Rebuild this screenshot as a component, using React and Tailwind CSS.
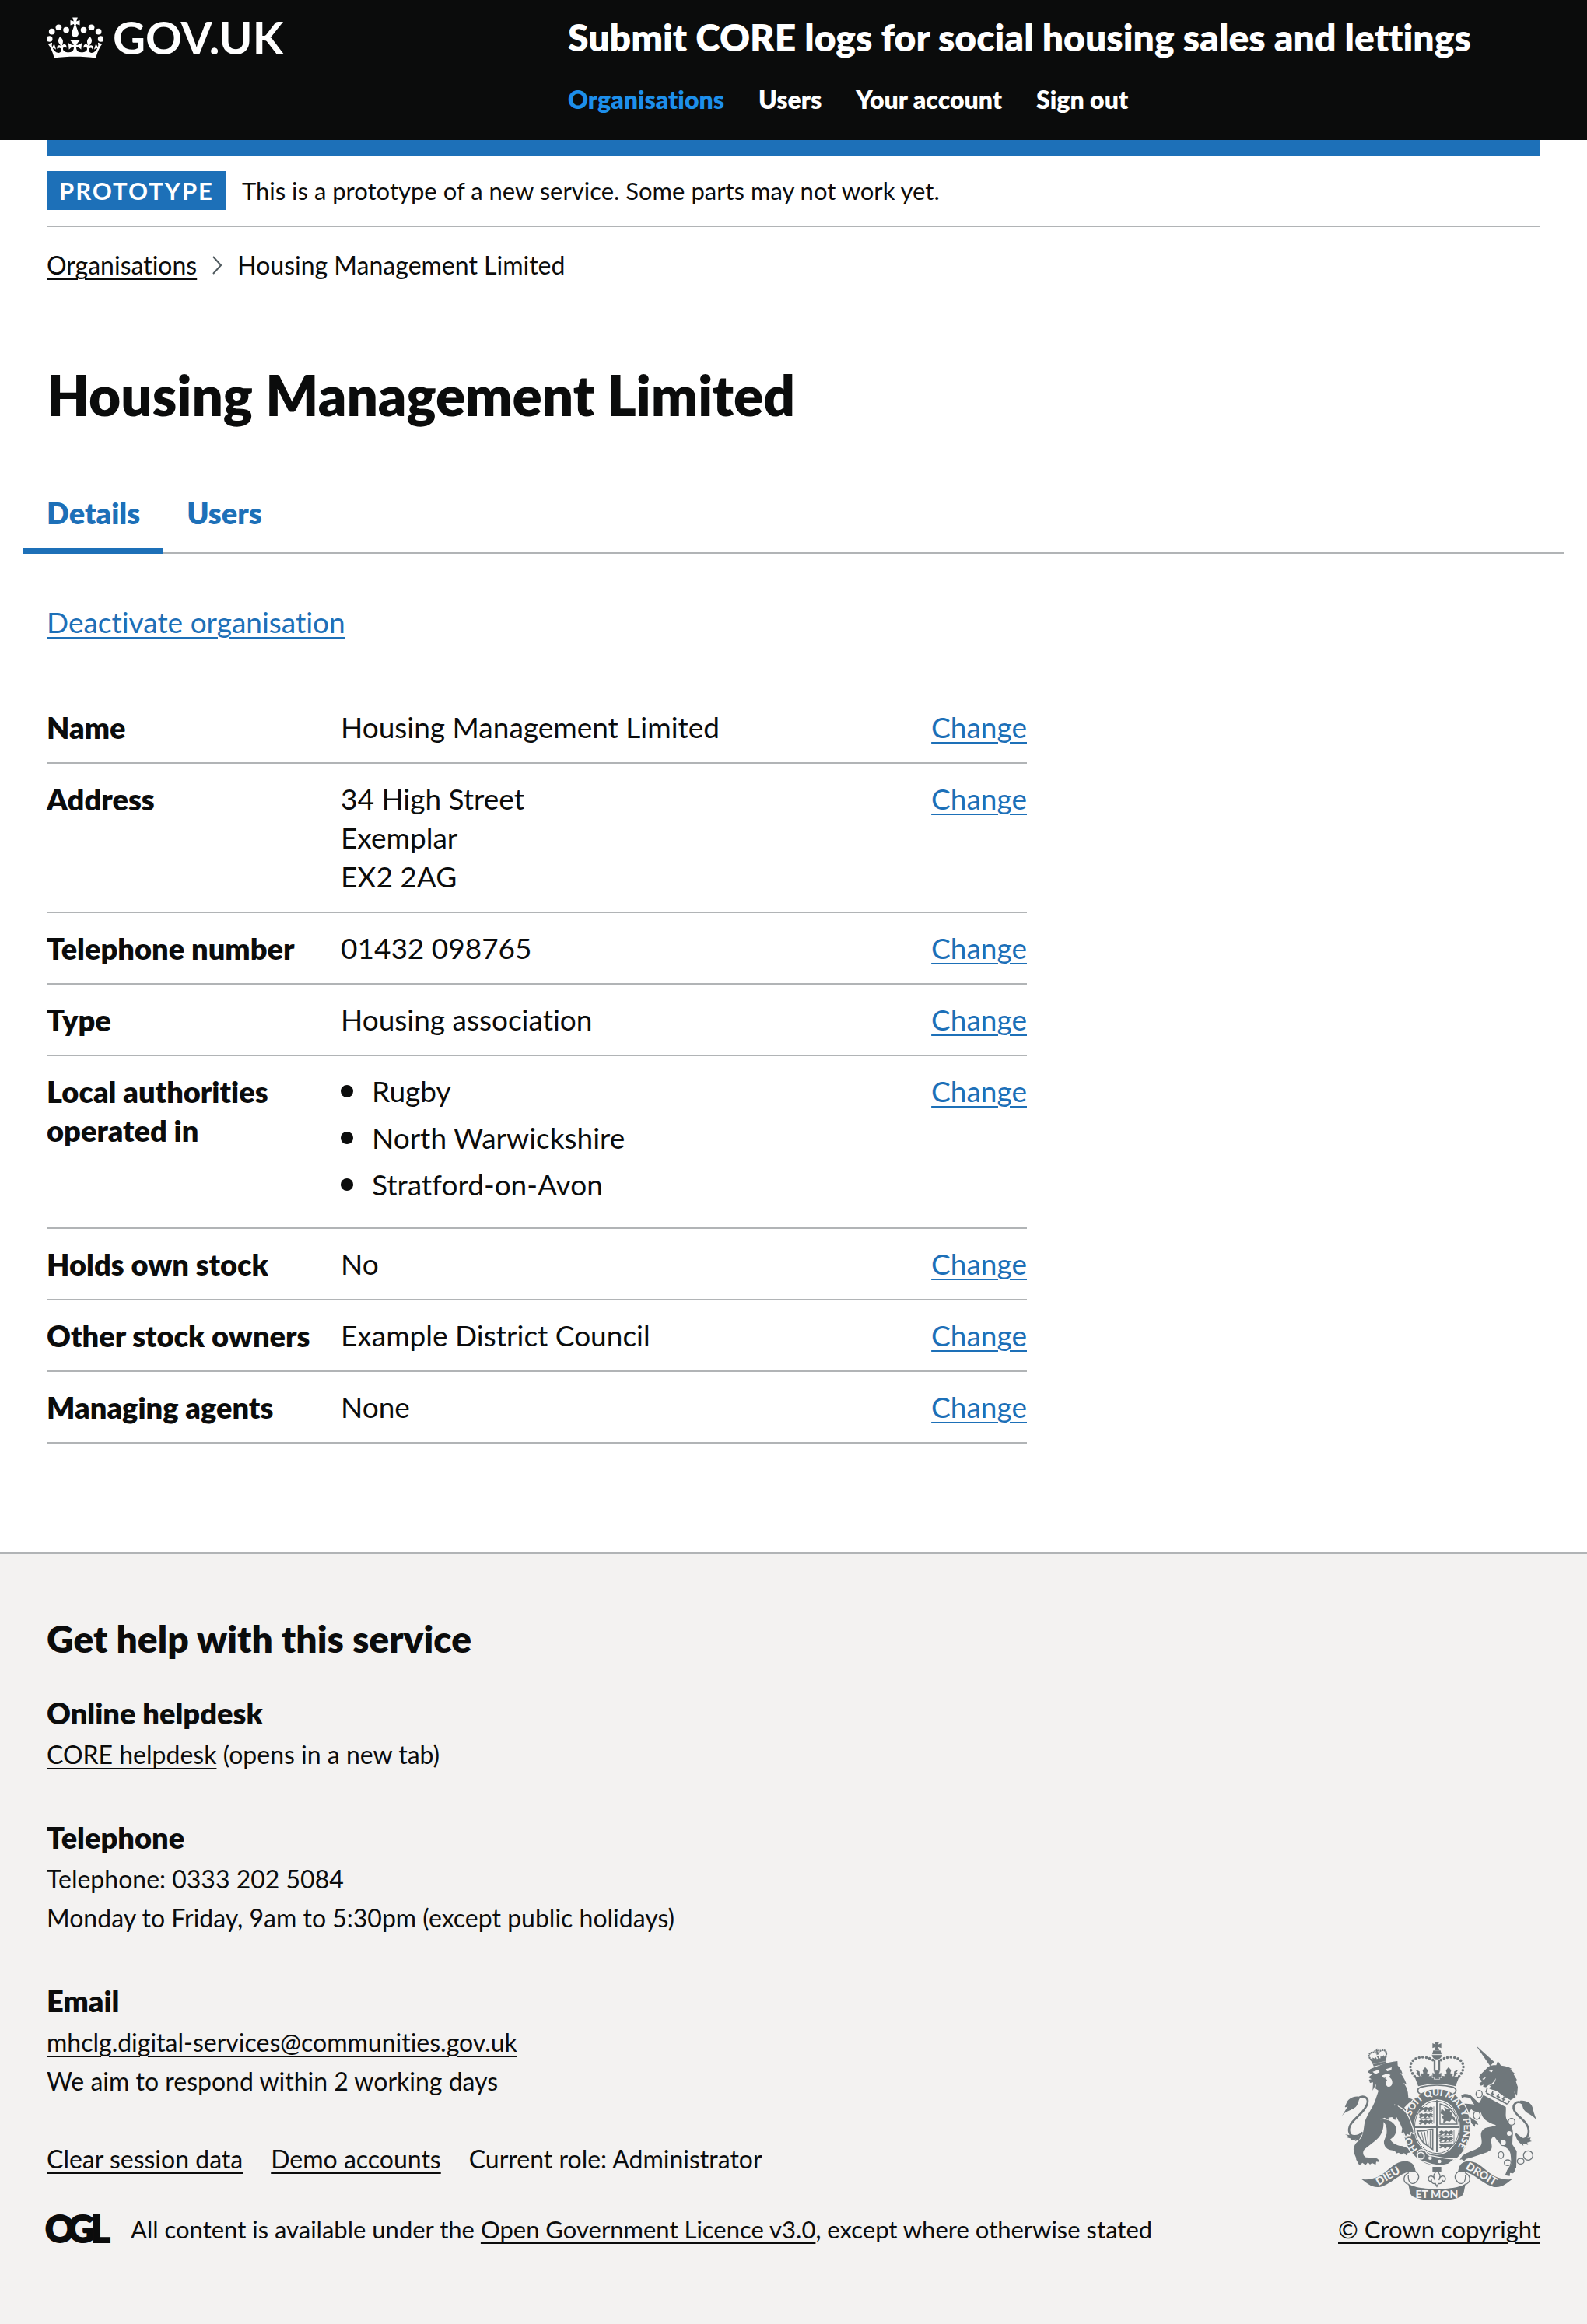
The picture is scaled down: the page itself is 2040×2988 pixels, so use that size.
import React from "react";

const links = {
  blue: "text-[#1d70b8] underline decoration-2 underline-offset-[5px]",
  dark: "text-[#0b0c0c] underline decoration-2 underline-offset-[5px]",
};

function Crown() {
  const half =
    "M15.9 29.2c4.4 0 8.7.3 12.4.8 1.1-4.5 2.4-7 3.7-8.8l-2.5-.9c.2 1.3.3 1.9 0 2.7-.4-.4-.8-1.1-1.1-2.3l-1.2 4c.7-.5 1.3-.8 2-.9-1.1 2.5-2.6 3.1-3.5 3-1.1-.2-1.7-1.2-1.5-2.1.3-1.2 1.5-1.5 2.1-.1 1.1-2.3-.8-3-2-2.3 1.9-1.9 2.1-3.5.6-5.6-2.1 1.6-2.1 3.2-1.2 5.5-1.2-1.4-3.2-.6-2.5 1.6.9-1.4 2.1-.5 1.9.8-.2 1.1-1.7 2.1-3.5 1.9-2.7-.2-2.9-2.1-2.9-3.6.7-.1 1.9.5 2.9 1.9l.4-4.3c-1.1 1.1-2.1 1.4-3.2 1.4.4-1.2 2.1-3 2.1-3H15.9z";
  return (
    <svg aria-hidden="true" viewBox="29 19 218 157" className="h-[53px] w-[73px]" fill="currentColor">
      {[[40, 102], [49, 74], [75, 58], [104, 68], [237, 102], [228, 74], [201, 58], [171, 68]].map(([x, y]) => (
        <circle key={x} cx={x} cy={y} r="11.5" />
      ))}
      <path d="M128 20h20l-5 15 13-5v20l-13-5-2 5 10 28c4 22-30 22-26 0l10-28-2-5-13 5V30l13 5z" />
      <g transform="translate(34 -8) scale(6.5 6.1)">
        <path d={half} />
        <path d={half} transform="translate(32 0) scale(-1 1)" />
      </g>
    </svg>
  );
}

function OglLogo() {
  return (
    <svg role="img" aria-label="Open Government Licence" viewBox="0 0 84 36" className="h-9 w-[84px] shrink-0 overflow-visible">
      <text y="35" x="-2 27 57" fontFamily="Lato, sans-serif" fontWeight="900" fontSize="47" fill="#0b0c0c" stroke="#0b0c0c" strokeWidth="2">
        OGL
      </text>
    </svg>
  );
}

const LIGHT = "#f3f2f1";

function CrownHalf() {
  return (
    <g>
      <path d="M352 206C320 168 338 133 384 132C404 133 418 139 428 147" fill="none" stroke="currentColor" strokeWidth="11" strokeLinecap="round" strokeDasharray="0 13.5" />
      <path d="M438 208h-66l-14-14 5-3-8-12 16 8 2 18 7 2c-6-8-2-16 5-11 2-8-4-10-1-15l9-11 9 11c3 5-3 8-1 15 8-4 11 4 5 10 10 0 14-4 14-9l8 3-2-16 12 6z" />
      <path d="M438 205l-86 2 14 37c40-10 60-10 72-10z" />
      <path d="M438 240c-26 0-46 3-64 8-14 6-12 20 0 25" fill="none" stroke="currentColor" strokeWidth="5" />
    </g>
  );
}

function RibbonHalf() {
  return (
    <g>
      <path d="M148 603c26 2 48-2 67-12 34-18 58-56 98-58 32-1 42 20 43 43-14-2-26-4-40 2-34 15-62 46-96 54-34 5-52-15-72-29z" />
      <path d="M354 572c18 12 18 28 3 42-10 8-20 6-25-2-4-8-5-16-4-25" fill="none" stroke="currentColor" strokeWidth="4" />
      <path d="M330 578c-22 8-26 34-4 44" fill="none" stroke="currentColor" strokeWidth="4" />
      <path d="M324 615c8 14 50 25 114 25v44c-48 0-76-5-92-14-18-12-11-36-22-55z" />
    </g>
  );
}

function Lions({ x, y }) {
  return (
    <g transform={`translate(${x} ${y})`}>
      {[0, 25, 50].map((dy) => (
        <path
          key={dy}
          transform={`translate(0 ${dy})`}
          d="M2 8l10-6 8 5 10-4 9 4 10-5 9 6-5 3 4 8-10-3-4 5-8-7-6 8-8-1 4-7-9 3-8 5-6-3 7-5z"
        />
      ))}
      <path d="M4 24l50 -3M6 49l46 -3M60 2v66M3 18v12" fill="none" stroke="currentColor" strokeWidth="2.5" />
    </g>
  );
}

function RoyalArms() {
  return (
    <svg role="img" aria-label="Royal coat of arms" viewBox="72 72 750 612" className="h-[204px] w-[250px] text-[#6f777b]" fill="currentColor">
      <defs>
        <path id="garter-text" d="M364 488A105 121 0 1 1 506 492" />
      </defs>

      {/* left supporter */}
      <g>
        <path d="M171 190l10-12c30-14 60-24 88-29l17-2 1 17c9 9 16 20 18 32l-8-3c9 12 18 24 24 45l-12-8c8 11 15 22 17 38l2 20 20 8-18 12-18 18c16 18 26 44 31 62l5 28-12-10-2 13-10-4-5 12-10-18-9 4 2-16-6-14-4-22-12 2-3 12-12-12-14 2 3 10-18-10-16 8c18-3 38 2 50 14 16 16 14 36 2 50l-14 12c10 18 30 24 48 26l28 12 4 12-12 2-6 10-8-9-12 6-9-8-10 3-5-10-18-3c-14-4-26-16-24-34l10-28c2-22-1-36-12-46 2 32-10 56-34 74l-38 30c-10 10-8 26 4 32l24 2c16-1 26 4 28 16l-12-1-2 12-14-7-8 6-8-9-9 11-12-9-12 10-12-22c0-14-12-22-10-44 4-24 24-28 32-46 10-26 6-42 14-64 9-24 26-46 36-70l14-42-12-8 3-18-14 26 2-32-12 2-4-12 10-2-12-8 14-10z" />
        <path d="M190 188l24-8 3 10-16 7zM242 178l22-7-2 11-16 4z" fill={LIGHT} />
        <path d="M225 205c8-8 24-10 34-5l-5 8 8 8c8 12 4 30-10 30-11 0-13-16-6-26l-8-6 6-5-10 3z" fill={LIGHT} />
        <path d="M132 292c20-16 44-6 38 18-8 34-52 56-66 84-10 20-3 42 14 42 16 2 26-6 34-14" fill="none" stroke="currentColor" strokeWidth="8" />
        <path d="M137 284c-22-3-42 8-48 26l-6 14c6 2 10-2 12-4l-23 38c14-18 34-21 48-30 15-9 14-28 22-40zM84 430l20 3 30 4 16-9-12 22-16 6 4-7-22 3 4-6-20-6 8-4z" />
        <g transform="rotate(-13 213 132)">
          <path d="M184 146l-6-14 10 4 2-8 7 6 6-4 2 8 5-2-4-10h12l-4 10 5 2 2-8 6 4 7-6 2 8 10-4-6 14-3 16h-50z" />
          <path d="M182 134c-14-26 14-32 28-18M242 134c14-26-14-32-28-18" fill="none" stroke="currentColor" strokeWidth="7" strokeLinecap="round" strokeDasharray="0 8" />
          <path d="M209 98h8l-2 6 8-2v8l-8-2 2 14h-10l2-14-8 2v-8l8 2zM186 153h54" stroke={LIGHT} strokeWidth="1" />
        </g>
      </g>

      {/* right supporter */}
      <g>
        <path d="M589 87l70 63-16 16z" />
        <path d="M600 211l4-10 28-28c10-10 20-10 35-10l6-17 12 18c14 2 30 4 42 13l-6 2 18 17-5 2 13 22-5 3 8 24-3 34-16-23-2 14-13-10-5 12-79-22c16-4 30-18 34-40-8 16-18 25-30 28l-8 8-12-3 2-7-10 4-6-9 10-8z" />
        <path d="M640 240l84-20 18 66-24 14z" />
        <path d="M638 185l17-5-5 10zM613 216l15-8-8 12z" fill={LIGHT} />
        <path d="M629 247l92 50-10 24-86-48z" fill={LIGHT} />
        <path d="M628 269l81 44M632 252l-5 16M718 300l-8 14M650 280l4-18M672 291l4-18M693 302l4-18M646 270l13 6M668 281l13 6M689 292l13 6" fill="none" stroke="currentColor" strokeWidth="5" />
        <path d="M618 278l86 46c2 24-6 40 10 58 14 18 20 28 16 58l-1 28 17 26-2 64c-8 4-2 14-12 22l-12-2-1 12-18-3 8-20 16-24c-2-28 0-46-14-58-22-16-40-26-51-48-14 4-14 15-11 31 3 18-1 22-16 30l-60 20-22 6-9 9-8-7-8 2 10-16c28-20 70-24 74-46 4-20-8-34 2-50 14-20 46-12 54-22-34-10-52-24-58-48-9-8-26 2-37-14-11 9-13 21-2 33l24 16 5 12-12-4-2 12-12-14-14-2-1-11-11-5c-6-18-8-31-1-44l-11 3-4-11c14-10 36-4 52-2l-16-26-22-3-10 3-2-10c14-10 34-3 42 5l26 25c10-8 8-22 22-37z" />
        <g fill={LIGHT} stroke="currentColor" strokeWidth="4">
          <ellipse cx="601" cy="274" rx="12" ry="14" />
          <ellipse cx="592" cy="356" rx="13" ry="16" />
          <circle cx="726" cy="381" r="13" />
          <circle cx="717" cy="426" r="11" />
          <circle cx="694" cy="461" r="12" />
          <ellipse cx="685" cy="509" rx="10" ry="13" />
          <ellipse cx="711" cy="539" rx="13" ry="11" />
          <ellipse cx="761" cy="533" rx="13" ry="11" />
          <circle cx="790" cy="511" r="18" />
        </g>
        <path d="M768 310c-24-14-40 6-32 26 10 26 46 38 54 68 6 24-4 42-18 44-14 0-20-10-30-20" fill="none" stroke="currentColor" strokeWidth="8" />
        <path d="M757 300c24-4 45 8 50 26l5 20 10 28c-14-20-38-24-47-38-8-10-6-26-18-36zM742 424l26 20 32-2-4 10 8 4-18 5 4 9-20-6 2 10c-18-12-32-28-30-50z" />
      </g>

      {/* ribbons */}
      <RibbonHalf />
      <g transform="translate(876 0) scale(-1 1)">
        <RibbonHalf />
      </g>

      {/* shield and garter */}
      <ellipse cx="438" cy="402" rx="133" ry="151" fill={LIGHT} />
      <ellipse cx="438" cy="402" rx="109" ry="127" fill="none" stroke="currentColor" strokeWidth="40" />
      <ellipse cx="438" cy="402" rx="86" ry="101" fill={LIGHT} stroke="currentColor" strokeWidth="3" />
      <path d="M438 298v200M350 402h176" stroke="currentColor" strokeWidth="6" />
      <Lions x={366} y={320} />
      <Lions x={444} y={412} />
      <path d="M450 312v78h66c0-36-22-66-66-78z" fill="none" stroke="currentColor" strokeWidth="4" />
      <path d="M456 330l14 12-4-18 16 10 10-6-4 14 10 6-4 10 12 6 4 18-14-12-8 10-12-3-14 10 2-16-8-8 8-8-12-6z" />
      <path d="M362 416c24 4 38-6 60-6v78c-12-8-18-14-28-20-16-12-26-30-32-52z" fill="none" stroke="currentColor" strokeWidth="5" />
      <path d="M378 420l10 40M390 419l8 50M401 417l4 58M412 415v68" stroke="currentColor" strokeWidth="3" />
      <path d="M362 514c-4-18 10-30 24-24 20 6 4 18 30 22 36 6 62 14 92 12l-26 20c-34 10-60 4-90-8-18-5-24-4-30-22z" stroke={LIGHT} strokeWidth="4" />
      <circle cx="376" cy="512" r="13" fill="none" stroke={LIGHT} strokeWidth="5" />
      <circle cx="412" cy="521" r="7" fill={LIGHT} />
      <circle cx="448" cy="534" r="7" fill={LIGHT} />
      <g fill={LIGHT} fontFamily="Lato, sans-serif" fontWeight="900" fontSize="36">
        <text>
          <textPath href="#garter-text">HON</textPath>
        </text>
        <text>
          <textPath href="#garter-text" startOffset="138">SOIT QUI MAL Y PENSE</textPath>
        </text>
      </g>
      <path d="M276 316c28 8 50 32 60 62l12 34 1 16-10-6-4 13-11-5-6 12-9-19-10 4 3-20-10-24z" stroke={LIGHT} strokeWidth="4" />
      <path d="M262 322l24-6 16 46-10 20z" />

      {/* crown */}
      <path d="M370 244q68-16 136 0l4 24q-72-24-146 0z" fill={LIGHT} />
      <CrownHalf />
      <g transform="translate(876 0) scale(-1 1)">
        <CrownHalf />
      </g>
      <path d="M429 72h18l-4 11 12-5v19l-12-5 4 13h-18l4-13-12 5V78l12 5zM424 106h28l5 18c-2 22-36 22-38 0z" />
      <path d="M419 122h38" stroke={LIGHT} strokeWidth="3" />
      <path d="M429 142v40M447 142v40" stroke="currentColor" strokeWidth="7" />
      <path d="M424 182h28l-5 12 9-3v21l-9-4 2 9h-22l2-9-9 4v-21l9 3z" stroke={LIGHT} strokeWidth="2" />

      {/* fleur-de-lis */}
      <path d="M421 555h34v20h-34z" />
      <path d="M438 570c-16 14-13 24-8 36-3-18-23-22-25-6-1 9 8 13 12 7 0 9 6 14 15 12l6 12 6-12c9 2 15-3 15-12 4 6 13 2 12-7-2-16-22-12-25 6 5-12 8-22-8-36z" fill={LIGHT} stroke="currentColor" strokeWidth="4" />

      {/* motto */}
      <g fill={LIGHT} fontFamily="Lato, sans-serif" fontWeight="900" fontSize="42">
        <text x="438" y="676" textAnchor="middle">ET MON</text>
        <text transform="translate(213 628) rotate(-31)">DIEU</text>
        <text transform="translate(547 561) rotate(31)">DROIT</text>
      </g>
    </svg>
  );
}

const address = ["34 High Street", "Exemplar", "EX2 2AG"];
const authorities = ["Rugby", "North Warwickshire", "Stratford-on-Avon"];

const details = [
  { key: "Name", value: "Housing Management Limited" },
  { key: "Address", value: address.map((line) => <div key={line}>{line}</div>) },
  { key: "Telephone number", value: "01432 098765" },
  { key: "Type", value: "Housing association" },
  {
    key: "Local authorities operated in",
    value: (
      <ul>
        {authorities.map((name) => (
          <li key={name} className="mb-[10px] flex items-center">
            <span className="mr-6 size-4 rounded-full bg-[#0b0c0c]" />
            {name}
          </li>
        ))}
      </ul>
    ),
  },
  { key: "Holds own stock", value: "No" },
  { key: "Other stock owners", value: "Example District Council" },
  { key: "Managing agents", value: "None" },
];

function HelpSection({ title, children }) {
  return (
    <section className="mb-14 text-[32px] leading-[50px]">
      <h3 className="mb-1 text-[38px] leading-[50px] font-extrabold">{title}</h3>
      {children}
    </section>
  );
}

export default function App() {
  return (
    <div className="bg-white font-[Lato,sans-serif] text-[#0b0c0c] [font-variant-ligatures:none]">
      <header className="bg-[#0b0c0c] px-[60px] pt-[18px] pb-8 text-white">
        <div className="flex items-start">
          <div className="w-[670px] shrink-0">
            <a href="#" className="inline-flex items-center gap-3 text-[58px] leading-[60px] font-bold">
              <Crown />
              <span>GOV.UK</span>
            </a>
          </div>
          <div>
            <a href="#" className="block text-[48px] leading-[60px] font-extrabold">
              Submit CORE logs for social housing sales and lettings
            </a>
            <nav className="mt-[30px] flex gap-11 text-[32px] leading-10 font-extrabold">
              <a href="#" className="text-[#1d8feb]">Organisations</a>
              <a href="#">Users</a>
              <a href="#">Your account</a>
              <a href="#">Sign out</a>
            </nav>
          </div>
        </div>
      </header>

      <div className="px-[60px]">
        <div className="h-5 bg-[#1d70b8]" />
        <div className="flex items-center border-b-2 border-[#b1b4b6] py-5 text-[31px] leading-[50px]">
          <strong className="mr-5 bg-[#1d70b8] px-4 font-bold tracking-[2px] text-white">PROTOTYPE</strong>
          <span>This is a prototype of a new service. Some parts may not work yet.</span>
        </div>

        <nav aria-label="Breadcrumb" className="flex items-center gap-5 pt-6 text-[32px] leading-[50px]">
          <a href="#" className={links.dark}>Organisations</a>
          <svg aria-hidden="true" viewBox="0 0 12 24" className="h-6 w-3" fill="none" stroke="#505a5f" strokeWidth="2">
            <path d="M1 1l10 11L1 23" />
          </svg>
          <span>Housing Management Limited</span>
        </nav>

        <main>
          <h1 className="mt-[102px] text-[71px] leading-[80px] font-extrabold">Housing Management Limited</h1>

          <nav aria-label="Organisation" className="-mx-[30px] mt-[86px] flex text-[38px] leading-[50px] font-extrabold text-[#1d70b8] shadow-[inset_0_-2px_0_#b1b4b6]">
            <a href="#" aria-current="page" className="border-b-8 border-[#1d70b8] px-[30px] pb-5">Details</a>
            <a href="#" className="px-[30px] pb-7">Users</a>
          </nav>

          <p className="mt-[63px] text-[37px] leading-[50px]">
            <a href="#" className={links.blue}>Deactivate organisation</a>
          </p>

          <div className="-mx-[30px] mt-[65px]">
            <dl className="w-2/3 px-[30px] text-[37px] leading-[50px]">
              {details.map((row) => (
                <div key={row.key} className="flex border-b-2 border-[#b1b4b6] py-5">
                  <dt className="w-[30%] shrink-0 pr-[30px] text-[38px] font-extrabold">{row.key}</dt>
                  <dd className="flex-1">{row.value}</dd>
                  <dd>
                    <a href="#" aria-label={`Change ${row.key.toLowerCase()}`} className={links.blue}>Change</a>
                  </dd>
                </div>
              ))}
            </dl>
          </div>
        </main>
      </div>

      <footer className="mt-[140px] border-t-2 border-[#b1b4b6] bg-[#f3f2f1] px-[60px] pt-[79px] pb-[97px] text-[31px] leading-[50px]">
        <h2 className="mb-10 text-[48px] leading-[60px] font-extrabold">Get help with this service</h2>
        <div className="flex items-end justify-between">
          <div>
            <HelpSection title="Online helpdesk">
              <p><a href="#" className={links.dark}>CORE helpdesk</a> (opens in a new tab)</p>
            </HelpSection>
            <HelpSection title="Telephone">
              <p>Telephone: 0333 202 5084</p>
              <p>Monday to Friday, 9am to 5:30pm (except public holidays)</p>
            </HelpSection>
            <HelpSection title="Email">
              <p><a href="#" className={links.dark}>mhclg.digital-services@communities.gov.uk</a></p>
              <p>We aim to respond within 2 working days</p>
            </HelpSection>
            <ul className="-mt-[6px] flex gap-9 text-[32px]">
              <li><a href="#" className={links.dark}>Clear session data</a></li>
              <li><a href="#" className={links.dark}>Demo accounts</a></li>
              <li>Current role: Administrator</li>
            </ul>
            <div className="mt-10 flex items-center gap-6">
              <OglLogo />
              <span>
                All content is available under the <a href="#" className={links.dark}>Open Government Licence v3.0</a>, except where otherwise stated
              </span>
            </div>
          </div>
          <a href="#" className={`flex flex-col items-center gap-3 ${links.dark}`}>
            <RoyalArms />
            <span>© Crown copyright</span>
          </a>
        </div>
      </footer>
    </div>
  );
}
